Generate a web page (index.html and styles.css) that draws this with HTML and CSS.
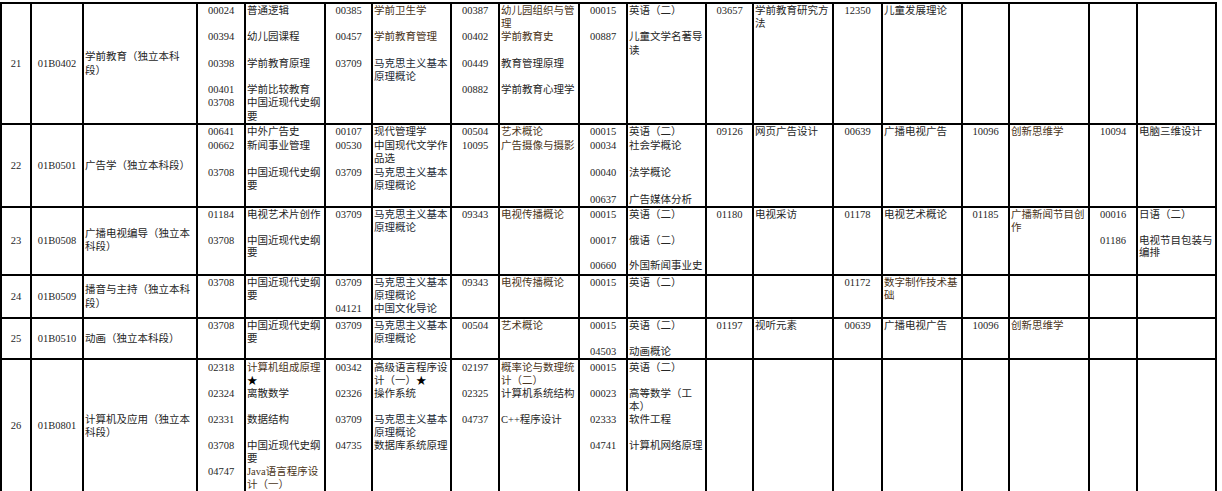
FILE: index.html
```html
<!DOCTYPE html>
<html lang="zh-CN">
<head>
<meta charset="utf-8">
<title>专业考试计划</title>
<link rel="stylesheet" href="styles.css">
</head>
<body>
<table class="plan">
  <colgroup>
    <col class="c-no"><col class="c-code"><col class="c-major">
    <col class="c-a1"><col class="c-a2">
    <col class="c-b1"><col class="c-b2">
    <col class="c-c1"><col class="c-c2">
    <col class="c-d1"><col class="c-d2">
    <col class="c-e1"><col class="c-e2">
    <col class="c-f1"><col class="c-f2">
    <col class="c-g1"><col class="c-g2">
    <col class="c-h1"><col class="c-h2">
  </colgroup>
  <tbody>
    <tr class="r21">
      <td class="no">21</td>
      <td class="no">01B0402</td>
      <td class="major">学前教育（独立本科<br>段）</td>
      <td class="cd">00024<br><br>00394<br><br>00398<br><br>00401<br>03708</td>
      <td class="nm">普通逻辑<br><br>幼儿园课程<br><br>学前教育原理<br><br>学前比较教育<br>中国近现代史纲<br>要</td>
      <td class="cd">00385<br><br>00457<br><br>03709</td>
      <td class="nm"><span class="br">学前卫生学</span><br><br><span class="br">学前教育管理</span><br><br><span class="bl">马克思主义基本<br>原理概论</span></td>
      <td class="cd">00387<br><br>00402<br><br>00449<br><br>00882</td>
      <td class="nm"><span class="br">幼儿园组织与管<br>理</span><br><span class="br">学前教育史</span><br><br>教育管理原理<br><br>学前教育心理学</td>
      <td class="cd">00015<br><br>00887</td>
      <td class="nm">英语（二）<br><br>儿童文学名著导<br>读</td>
      <td class="cd">03657</td>
      <td class="nm">学前教育研究方<br>法</td>
      <td class="cd">12350</td>
      <td class="nm">儿童发展理论</td>
      <td class="cd"></td><td class="nm"></td>
      <td class="cd"></td><td class="nm"></td>
    </tr>
    <tr class="r22">
      <td class="no">22</td>
      <td class="no">01B0501</td>
      <td class="major">广告学（独立本科段）</td>
      <td class="cd">00641<br>00662<br><br>03708</td>
      <td class="nm">中外广告史<br>新闻事业管理<br><br>中国近现代史纲<br>要</td>
      <td class="cd">00107<br>00530<br><br>03709</td>
      <td class="nm">现代管理学<br>中国现代文学作<br>品选<br><span class="bl">马克思主义基本<br>原理概论</span></td>
      <td class="cd">00504<br>10095</td>
      <td class="nm"><span class="br">艺术概论</span><br><span class="br">广告摄像与摄影</span></td>
      <td class="cd">00015<br>00034<br><br>00040<br><br>00637</td>
      <td class="nm">英语（二）<br>社会学概论<br><br>法学概论<br><br>广告媒体分析</td>
      <td class="cd">09126</td>
      <td class="nm">网页广告设计</td>
      <td class="cd">00639</td>
      <td class="nm">广播电视广告</td>
      <td class="cd">10096</td>
      <td class="nm"><span class="br">创新思维学</span></td>
      <td class="cd">10094</td>
      <td class="nm">电脑三维设计</td>
    </tr>
    <tr class="r23">
      <td class="no">23</td>
      <td class="no">01B0508</td>
      <td class="major">广播电视编导（独立本<br>科段）</td>
      <td class="cd">01184<br><br>03708</td>
      <td class="nm">电视艺术片创作<br><br>中国近现代史纲<br>要</td>
      <td class="cd">03709</td>
      <td class="nm"><span class="bl">马克思主义基本<br>原理概论</span></td>
      <td class="cd">09343</td>
      <td class="nm"><span class="br">电视传播概论</span></td>
      <td class="cd">00015<br><br>00017<br><br>00660</td>
      <td class="nm">英语（二）<br><br>俄语（二）<br><br>外国新闻事业史</td>
      <td class="cd">01180</td>
      <td class="nm">电视采访</td>
      <td class="cd">01178</td>
      <td class="nm">电视艺术概论</td>
      <td class="cd">01185</td>
      <td class="nm"><span class="br">广播新闻节目创<br>作</span></td>
      <td class="cd">00016<br><br>01186</td>
      <td class="nm">日语（二）<br><br>电视节目包装与<br>编排</td>
    </tr>
    <tr class="r24">
      <td class="no">24</td>
      <td class="no">01B0509</td>
      <td class="major">播音与主持（独立本科<br>段）</td>
      <td class="cd">03708</td>
      <td class="nm">中国近现代史纲<br>要</td>
      <td class="cd">03709<br><br>04121</td>
      <td class="nm"><span class="bl">马克思主义基本<br>原理概论<br>中国文化导论</span></td>
      <td class="cd">09343</td>
      <td class="nm"><span class="br">电视传播概论</span></td>
      <td class="cd">00015</td>
      <td class="nm">英语（二）</td>
      <td class="cd"></td>
      <td class="nm"></td>
      <td class="cd">01172</td>
      <td class="nm"><span class="br">数字制作技术基<br>础</span></td>
      <td class="cd"></td><td class="nm"></td>
      <td class="cd"></td><td class="nm"></td>
    </tr>
    <tr class="r25">
      <td class="no">25</td>
      <td class="no">01B0510</td>
      <td class="major">动画（独立本科段）</td>
      <td class="cd">03708</td>
      <td class="nm">中国近现代史纲<br>要</td>
      <td class="cd">03709</td>
      <td class="nm"><span class="bl">马克思主义基本<br>原理概论</span></td>
      <td class="cd">00504</td>
      <td class="nm"><span class="br">艺术概论</span></td>
      <td class="cd">00015<br><br>04503</td>
      <td class="nm">英语（二）<br><br>动画概论</td>
      <td class="cd">01197</td>
      <td class="nm">视听元素</td>
      <td class="cd">00639</td>
      <td class="nm">广播电视广告</td>
      <td class="cd">10096</td>
      <td class="nm"><span class="br">创新思维学</span></td>
      <td class="cd"></td><td class="nm"></td>
    </tr>
    <tr class="r26">
      <td class="no">26</td>
      <td class="no">01B0801</td>
      <td class="major">计算机及应用（独立本<br>科段）</td>
      <td class="cd">02318<br><br>02324<br><br>02331<br><br>03708<br><br>04747</td>
      <td class="nm"><span class="br">计算机组成原理</span><br><span class="star">★</span><br>离散数学<br><br>数据结构<br><br>中国近现代史纲<br>要<br><span class="br">Java语言程序设<br>计（一）</span></td>
      <td class="cd">00342<br><br>02326<br><br>03709<br><br>04735</td>
      <td class="nm">高级语言程序设<br>计（一）<span class="star">★</span><br>操作系统<br><br><span class="bl">马克思主义基本<br>原理概论</span><br>数据库系统原理</td>
      <td class="cd">02197<br><br>02325<br><br>04737</td>
      <td class="nm"><span class="br">概率论与数理统<br>计（二）</span><br>计算机系统结构<br><br>C++程序设计</td>
      <td class="cd">00015<br><br>00023<br><br>02333<br><br>04741</td>
      <td class="nm">英语（二）<br><br>高等数学（工<br>本）<br>软件工程<br><br>计算机网络原理</td>
      <td class="cd"></td><td class="nm"></td>
      <td class="cd"></td><td class="nm"></td>
      <td class="cd"></td><td class="nm"></td>
      <td class="cd"></td><td class="nm"></td>
    </tr>
  </tbody>
</table>
</body>
</html>
```

FILE: styles.css
```css
html, body {
  margin: 0;
  padding: 0;
  background: #ffffff;
}

body {
  font-family: "Liberation Serif", "Noto Sans CJK SC", serif;
  font-size: 10.5px;
  color: #262626;
}

.plan {
  margin-top: 2px;
  border-collapse: separate;
  border-spacing: 0;
  table-layout: fixed;
  width: 1217px;
  border-left: 2px solid #000;
  border-top: 2px solid #000;
}

.c-no { width: 30px; }
.c-code { width: 52px; }
.c-major { width: 114px; }
.c-a1 { width: 48px; }
.c-a2 { width: 80px; }
.c-b1 { width: 47px; }
.c-b2 { width: 79px; }
.c-c1 { width: 48px; }
.c-c2 { width: 80px; }
.c-d1 { width: 48px; }
.c-d2 { width: 79px; }
.c-e1 { width: 47px; }
.c-e2 { width: 80px; }
.c-f1 { width: 49px; }
.c-f2 { width: 80px; }
.c-g1 { width: 47px; }
.c-g2 { width: 80px; }
.c-h1 { width: 48px; }
.c-h2 { width: 79px; }

.plan td {
  border-right: 2px solid #000;
  border-bottom: 2px solid #000;
  padding: 0;
  vertical-align: top;
  white-space: nowrap;
  overflow: hidden;
  box-sizing: border-box;
}

.plan td.no {
  text-align: center;
  vertical-align: middle;
}

.plan td.major {
  text-align: left;
  vertical-align: middle;
  padding-left: 1px;
}

.plan td.cd {
  text-align: center;
}

.plan td.nm {
  text-align: left;
  padding-left: 1px;
}

.br { color: #4a3420; }
.bl { color: #222a36; }
.star { color: #000; }

.r21 { height: 121px; line-height: 13.2px; }
.r22 { height: 83px; line-height: 13.5px; }
.r23 { height: 68px; line-height: 12.8px; }
.r24 { height: 43px; line-height: 13.1px; }
.r25 { height: 41px; line-height: 13px; }
.r26 { height: 131px; line-height: 13px; }

.r23 td.cd, .r23 td.nm { padding-top: 1px; }
.r26 td.cd, .r26 td.nm { padding-top: 1px; }
```
